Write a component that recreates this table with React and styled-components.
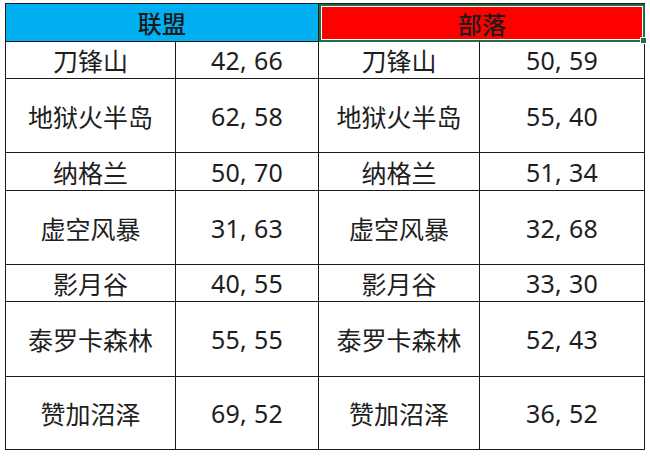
import React from 'react'
import styled, { createGlobalStyle } from 'styled-components'

const GlobalStyle = createGlobalStyle`
  html, body {
    margin: 0;
    padding: 0;
    background: #ffffff;
  }
  body {
    font-family: "Noto Sans", "Noto Sans CJK SC", sans-serif;
    color: #1e1e1e;
  }
`

const alliance = [
  ['刀锋山', '42, 66'],
  ['地狱火半岛', '62, 58'],
  ['纳格兰', '50, 70'],
  ['虚空风暴', '31, 63'],
  ['影月谷', '40, 55'],
  ['泰罗卡森林', '55, 55'],
  ['赞加沼泽', '69, 52'],
]

const horde = [
  ['刀锋山', '50, 59'],
  ['地狱火半岛', '55, 40'],
  ['纳格兰', '51, 34'],
  ['虚空风暴', '32, 68'],
  ['影月谷', '33, 30'],
  ['泰罗卡森林', '52, 43'],
  ['赞加沼泽', '36, 52'],
]

const rowHeights = [37, 74, 38, 74, 37, 75, 73]

const Page = styled.div`
  padding: 3px 0 0 5px;
`

const Sheet = styled.div`
  display: grid;
  grid-template-columns: 170px 143px 161px 165px;
  grid-template-rows: 38px ${rowHeights.map(h => `${h}px`).join(' ')};
  width: max-content;
  border-left: 1px solid #1a1a1a;
  border-top: 1px solid #1a1a1a;
  box-sizing: border-box;
`

const Cell = styled.div`
  box-sizing: border-box;
  display: flex;
  align-items: center;
  justify-content: center;
  border-right: 1px solid #1a1a1a;
  border-bottom: 1px solid #1a1a1a;
  font-size: 25px;
  letter-spacing: 0.3px;
  white-space: nowrap;
`

const Header = styled(Cell)`
  position: relative;
  grid-column: span 2;
  font-size: 24px;
  font-weight: 500;
  font-family: "Noto Sans CJK SC", sans-serif;
  background: ${props => props.bg};
  color: #1b1b1b;

  ${props => props.selected && `
    border: 2px solid #1f6e46;
    box-shadow: inset 0 0 0 1px #ffffff;
    &::after {
      content: '';
      position: absolute;
      right: -4px;
      bottom: -4px;
      width: 5px;
      height: 5px;
      background: #1f6e46;
      border: 1px solid #ffffff;
    }
  `}
`

const Place = styled(Cell)`
  font-family: "Noto Sans CJK SC", sans-serif;
  letter-spacing: 0;
`

const App = () => {
  return (
    <Page>
      <GlobalStyle />
      <Sheet>
        <Header bg="#00b0f0">联盟</Header>
        <Header bg="#ff0000" selected>部落</Header>
        {alliance.map((row, i) => (
          <React.Fragment key={row[0]}>
            <Place>{row[0]}</Place>
            <Cell>{row[1]}</Cell>
            <Place>{horde[i][0]}</Place>
            <Cell>{horde[i][1]}</Cell>
          </React.Fragment>
        ))}
      </Sheet>
    </Page>
  )
}

export default App
